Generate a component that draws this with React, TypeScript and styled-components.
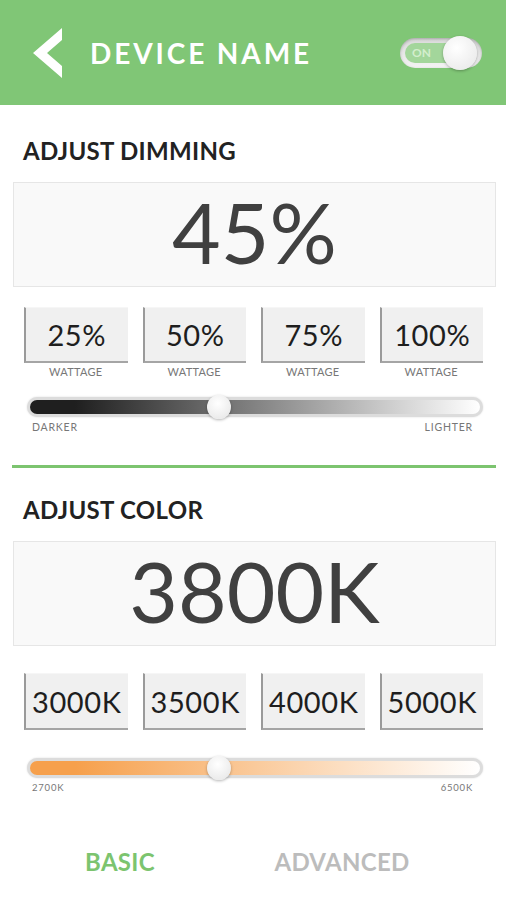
import React from 'react'
import styled, { createGlobalStyle } from 'styled-components'

const GlobalStyle = createGlobalStyle`
  html, body {
    margin: 0;
    padding: 0;
    background: #ffffff;
  }
  body {
    font-family: Lato, "Open Sans", sans-serif;
  }
`;

const Screen = styled.div`
  width: 506px;
  height: 900px;
  background: #fff;
  overflow: hidden;
`;

const Header = styled.header`
  height: 105px;
  background: #80c676;
  display: flex;
  align-items: center;
  padding: 0 24px 0 33px;
  box-sizing: border-box;
`;

const BackIcon = styled.svg`
  width: 30px;
  height: 50px;
  flex: none;
`;

const Title = styled.h1`
  flex: 1;
  margin: 0 0 0 27px;
  font-size: 28px;
  font-weight: 700;
  letter-spacing: 2.9px;
  color: #fff;
`;

const Toggle = styled.div`
  position: relative;
  width: 82px;
  height: 30px;
  border-radius: 15px;
  background: linear-gradient(#d9d9d9, #f4f4f4);
  box-shadow: inset 0 1px 3px rgba(0, 0, 0, 0.25);
  display: flex;
  align-items: center;
`;

const ToggleFill = styled.span`
  margin-left: 5px;
  width: 48px;
  height: 20px;
  border-radius: 10px 0 0 10px;
  background: #a3d69b;
  color: #d3eecd;
  font-size: 12px;
  font-weight: 700;
  line-height: 20px;
  padding-left: 7px;
  box-sizing: border-box;
`;

const ToggleKnob = styled.span`
  position: absolute;
  right: 5px;
  top: -2px;
  width: 34px;
  height: 34px;
  border-radius: 50%;
  background: radial-gradient(circle at 40% 35%, #ffffff, #e6e6e6);
  box-shadow: 0 1px 3px rgba(0, 0, 0, 0.3);
`;

const Body = styled.main`
  padding: 0 10px 0 13px;
`;

const Heading = styled.h2<{ $top: number }>`
  margin: ${(p) => p.$top}px 0 0 10px;
  font-size: 24px;
  line-height: 24px;
  font-weight: 700;
  letter-spacing: 0.3px;
  color: #222;
`;

const Readout = styled.div`
  margin-top: 19px;
  height: 105px;
  padding-bottom: 7px;
  background: #f9f9f9;
  border: 1px solid #e6e6e6;
  box-sizing: border-box;
  display: flex;
  align-items: center;
  justify-content: center;
  font-size: 84px;
  font-weight: 400;
  color: #404040;
`;

const Presets = styled.div<{ $top: number }>`
  margin: ${(p) => p.$top}px 13px 0 11px;
  display: grid;
  grid-template-columns: repeat(4, 1fr);
  column-gap: 15px;
`;

const Preset = styled.div`
  display: flex;
  flex-direction: column;
  align-items: center;
`;

const PresetButton = styled.button<{ $tall: boolean }>`
  width: 100%;
  height: ${(p) => (p.$tall ? 57 : 56)}px;
  padding: 0;
  background: #f0f0f0;
  border: none;
  border-left: 2px solid #9a9a9a;
  border-bottom: 2px solid #a5a5a5;
  border-top: 1px solid #f6f6f6;
  box-sizing: border-box;
  font-family: Lato, "Open Sans", sans-serif;
  font-size: 29px;
  color: #1e1e1e;
  letter-spacing: 0.6px;
`;

const PresetLabel = styled.span`
  margin-top: 3px;
  font-size: 11px;
  line-height: 11px;
  color: #777;
  letter-spacing: 0.3px;
`;

const SliderTrack = styled.div<{ $top: number }>`
  position: relative;
  margin: ${(p) => p.$top}px 13px 0 14px;
  height: 20px;
  border-radius: 10px;
  padding: 3px;
  box-sizing: border-box;
  background: #dcdcdc;
  box-shadow: 0 0 2px rgba(0, 0, 0, 0.15);
`;

const SliderFill = styled.div<{ $from: string }>`
  height: 100%;
  border-radius: 7px;
  background: linear-gradient(90deg, ${(p) => p.$from} 0%, ${(p) => p.$from} 10%, #ffffff 100%);
`;

const SliderThumb = styled.div`
  position: absolute;
  top: -2px;
  width: 24px;
  height: 24px;
  margin-left: -12px;
  border-radius: 50%;
  background: radial-gradient(circle at 45% 35%, #ffffff, #e4e4e4);
  box-shadow: 0 1px 3px rgba(0, 0, 0, 0.3);
`;

const SliderLabels = styled.div<{ $size: number }>`
  margin: 4px 23px 0 19px;
  display: flex;
  justify-content: space-between;
  font-size: ${(p) => p.$size}px;
  line-height: 12px;
  color: #777;
  letter-spacing: 0.8px;
`;

const Divider = styled.hr`
  margin: 32px 0 0 -1px;
  border: none;
  height: 3px;
  background: #7cc46f;
`;

const Tabs = styled.nav`
  margin-top: 53px;
  display: grid;
  grid-template-columns: 214px 230px;
`;

const Tab = styled.span<{ $active: boolean }>`
  text-align: center;
  font-size: 24px;
  font-weight: 700;
  letter-spacing: 0.3px;
  color: ${(p) => (p.$active ? '#7cc46f' : '#bcbcbc')};
`;

type SliderProps = {
  from: string
  top: number
  value: number
  left: string
  right: string
  labelSize: number
}

const Slider = ({ from, top, value, left, right, labelSize }: SliderProps) => (
  <>
    <SliderTrack $top={top}>
      <SliderFill $from={from} />
      <SliderThumb style={{ left: `${value}%` }} />
    </SliderTrack>
    <SliderLabels $size={labelSize}>
      <span>{left}</span>
      <span>{right}</span>
    </SliderLabels>
  </>
)

const dimming = ['25%', '50%', '75%', '100%']
const colors = ['3000K', '3500K', '4000K', '5000K']

const App = () => {
  return (
    <Screen>
      <GlobalStyle />
      <Header>
        <BackIcon viewBox="0 0 30 50">
          <path d="M29 0 L29 12 L14 25 L29 38 L29 50 L0 25 Z" fill="#fff" />
        </BackIcon>
        <Title>DEVICE NAME</Title>
        <Toggle>
          <ToggleFill>ON</ToggleFill>
          <ToggleKnob />
        </Toggle>
      </Header>
      <Body>
        <Heading $top={34}>ADJUST DIMMING</Heading>
        <Readout>45%</Readout>
        <Presets $top={20}>
          {dimming.map((d) => (
            <Preset key={d}>
              <PresetButton $tall={false}>{d}</PresetButton>
              <PresetLabel>WATTAGE</PresetLabel>
            </Preset>
          ))}
        </Presets>
        <Slider from="#1f1f1f" top={20} value={42} left="DARKER" right="LIGHTER" labelSize={10.5} />
        <Divider />
        <Heading $top={30}>ADJUST COLOR</Heading>
        <Readout>3800K</Readout>
        <Presets $top={27}>
          {colors.map((c) => (
            <Preset key={c}>
              <PresetButton $tall>{c}</PresetButton>
            </Preset>
          ))}
        </Presets>
        <Slider from="#f6a04c" top={28} value={42} left="2700K" right="6500K" labelSize={9.5} />
        <Tabs>
          <Tab $active>BASIC</Tab>
          <Tab $active={false}>ADVANCED</Tab>
        </Tabs>
      </Body>
    </Screen>
  )
}

export default App
